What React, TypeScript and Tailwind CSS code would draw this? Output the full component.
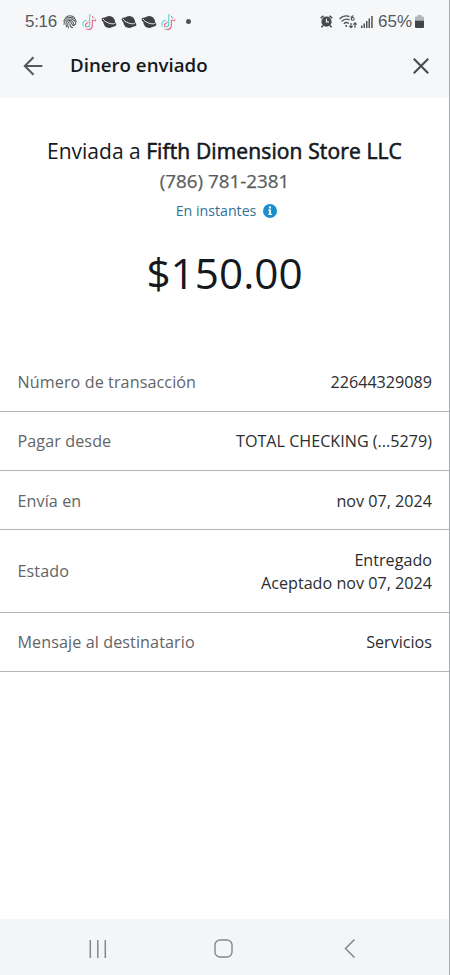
import { Fragment } from 'react'

interface Detalle {
  etiqueta: string
  valor: string[]
}

const detalles: Detalle[] = [
  { etiqueta: 'Número de transacción', valor: ['22644329089'] },
  { etiqueta: 'Pagar desde', valor: ['TOTAL CHECKING (...5279)'] },
  { etiqueta: 'Envía en', valor: ['nov 07, 2024'] },
  { etiqueta: 'Estado', valor: ['Entregado', 'Aceptado nov 07, 2024'] },
  { etiqueta: 'Mensaje al destinatario', valor: ['Servicios'] },
]

function Huella() {
  return (
    <svg viewBox="0 0 14 14" className="h-3.5 w-3.5" fill="none" stroke="#55575a" strokeWidth="1.05" strokeLinecap="round">
      <path d="M2.6 2.5C5 .1 9 .1 11.4 2.5" />
      <path d="M.8 6.2C2.2 1.3 11.8 1.3 13.2 6.2" />
      <path d="M1 9.3C1 2.3 12.8 2.1 12.8 8.8c0 1.2-2.2 1.2-2.3 0C10.3 4.1 3 4.5 3 8.7c0 1 .2 2 .6 3" />
      <path d="M5.6 12.9C4.2 10.3 4.4 6.8 6.8 6.8c2.9 0 .9 4 4.5 4" />
      <path d="M6.9 8.7c0 2.3 1 3.5 2.7 4" />
    </svg>
  )
}

function TikTok() {
  const nota = 'M8.2.5v9.800a3.400 3.400 0 1 1-3.400-3.500M8.200 1c.3 2.300 1.700 3.600 4.300 3.800'
  return (
    <svg viewBox="0 0 15 16" className="h-4 w-[15px]" fill="none" strokeWidth="2.1">
      <path d={nota} stroke="#5fd0d4" />
      <path d={nota} stroke="#e0637f" transform="translate(1.6 1.5)" />
      <path d={nota} stroke="#f7f8fa" strokeWidth="1.6" transform="translate(.8 .8)" />
    </svg>
  )
}

function Planeta() {
  return (
    <svg viewBox="0 0 16 14" className="h-3.5 w-4">
      <circle cx="8.2" cy="7" r="5.9" fill="#3f4144" />
      <ellipse cx="8" cy="7" rx="7.9" ry="3.3" transform="rotate(24 8 7)" fill="#3f4144" />
      <path d="M2.2 4.3c.5 2.4 8.8 5.9 11.4 4.2" fill="none" stroke="#f5f7f9" strokeWidth="0.9" strokeLinecap="round" />
    </svg>
  )
}

function Alarma() {
  return (
    <svg viewBox="0 0 13 13" className="h-[13px] w-[13px]">
      <path d="M2.8 10.5 1.5 12.4M10.2 10.5l1.3 1.9" stroke="#47494c" strokeWidth="1.6" />
      <path d="M.7 3.2 3.5.9M12.3 3.2 9.5.9" stroke="#47494c" strokeWidth="1.5" />
      <circle cx="6.5" cy="6.7" r="5.1" fill="#47494c" />
      <path d="M6.4 3.8v3.100h2.500" fill="none" stroke="#f5f6f8" strokeWidth="1.1" />
    </svg>
  )
}

function Wifi() {
  return (
    <svg viewBox="0 0 18 14" className="h-3.5 w-[18px]" fill="none" stroke="#505255" strokeWidth="1.3">
      <path d="M.6 4C3.300 1 7.500.3 10.500 1.600" />
      <path d="M2.600 6.500C4.800 4.200 8 3.700 10.600 5" />
      <path d="M4.800 8.800c1.500-1.500 3.500-1.500 5-.3" />
      <circle cx="7.2" cy="11" r="1" fill="#505255" stroke="none" />
      <path d="M14.600.7c-1.700.2-2.400 1.300-2.400 2.800" strokeWidth="1.1" />
      <circle cx="13.7" cy="3.9" r="1.4" strokeWidth="1.1" />
      <path d="M12 8v4.600M10.200 10.900l1.800 1.800 1.800-1.800M16 12.700V8M14.300 9.600 16 7.900l1.700 1.700" strokeWidth="1.2" />
    </svg>
  )
}

function Senal() {
  return (
    <svg viewBox="0 0 12 12" className="h-3 w-3" fill="#505255">
      <path d="M0 9.500h1.500V12H0zM2.500 7.500H4V12H2.500zM5 5h1.500v7H5zM7.500 2.500H9V12H7.500zM10.200 0h1.500v12h-1.500z" />
    </svg>
  )
}

function Bateria() {
  return (
    <svg viewBox="0 0 9 13" className="h-[13px] w-[9px]">
      <path d="M2.500 0h4v1.500H8a1 1 0 0 1 1 1V6H0V2.500a1 1 0 0 1 1-1h1.500z" fill="#b3b5b7" />
      <path d="M0 5.700h9V12a1 1 0 0 1-1 1H1a1 1 0 0 1-1-1z" fill="#424447" />
    </svg>
  )
}

function BarraEstado() {
  return (
    <div className="flex h-[43px] items-center justify-between pl-[25px] pr-[25px] font-['Liberation_Sans',sans-serif] text-[17px] text-[#55585b]">
      <div className="flex items-center">
        <span className="w-[38px] tracking-[-0.3px]">5:16</span>
        <Huella />
        <div className="ml-[5px] flex items-center gap-[3.9px]">
          <TikTok />
          <Planeta />
          <Planeta />
          <Planeta />
          <TikTok />
        </div>
        <span className="ml-[10px] h-[5px] w-[5px] rounded-full bg-[#505255]" />
      </div>
      <div className="flex items-center">
        <Alarma />
        <span className="ml-[6px]"><Wifi /></span>
        <span className="ml-[4px]"><Senal /></span>
        <span className="ml-[5px] w-[37px]">65%</span>
        <Bateria />
      </div>
    </div>
  )
}

function Encabezado() {
  return (
    <header className="h-[98px] bg-[#f5f7f9]">
      <BarraEstado />
      <div className="flex h-[45px] items-center pl-[23px] pr-5">
        <button aria-label="Volver">
          <svg viewBox="0 0 20 20" className="h-5 w-5" fill="none" stroke="#55585b" strokeWidth="2">
            <path d="M19.300 10H2M10.500 1.300 1.800 10l8.700 8.700" />
          </svg>
        </button>
        <h1 className="ml-[27px] flex-1 text-[18.7px] font-semibold text-[#14191e]">Dinero enviado</h1>
        <button aria-label="Cerrar">
          <svg viewBox="0 0 16 16" className="h-4 w-4" fill="none" stroke="#494c4f" strokeWidth="2.1">
            <path d="m.8.8 14.400 14.400M15.200.8.800 15.200" />
          </svg>
        </button>
      </div>
    </header>
  )
}

function Resumen() {
  return (
    <section className="flex h-[254.7px] flex-col items-center pt-[38px] text-[#14191e]">
      <p className="whitespace-nowrap text-[21px] leading-[30px]">
        Enviada a <span className="tracking-[0.13px] [-webkit-text-stroke:0.6px]">Fifth Dimension Store LLC</span>
      </p>
      <p className="text-[18.8px] leading-[30px] text-[#5b5d60] [-webkit-text-stroke:0.25px]">(786) 781-2381</p>
      <div className="flex h-[29px] items-center gap-[7px] pl-[4px] text-[14.2px] text-[#2f7397]">
        <span>En instantes</span>
        <svg viewBox="0 0 14 14" className="h-3.5 w-3.5">
          <circle cx="7" cy="7" r="7" fill="#1990cc" />
          <path d="M6 2.500h2v2H6zM5.200 5.500H8v4.300h1V11H5.200V9.800h1V6.700h-1z" fill="#fff" />
        </svg>
      </div>
      <p className="mt-[18px] text-[42.3px] leading-[60px]">$150.00</p>
    </section>
  )
}

export default function App() {
  return (
    <div className="flex h-[975px] w-[450px] flex-col overflow-hidden border-r border-[#a6a8aa] bg-white font-['Open_Sans',sans-serif]">
      <Encabezado />
      <main className="flex-1">
        <Resumen />
        <dl>
          {detalles.map(d => (
            <div key={d.etiqueta} className="flex items-center justify-between border-b border-[#b5b5b5] pb-[16.5px] pl-[17.5px] pr-[17px] pt-[18.5px] text-[16.15px] leading-[23.2px]">
              <dt className="tracking-[0.09px] text-[#626466]">{d.etiqueta}</dt>
              <dd className="text-right text-[#2b2d2f]">
                {d.valor.map((linea, i) => (
                  <Fragment key={linea}>
                    {i > 0 && <br />}
                    {linea}
                  </Fragment>
                ))}
              </dd>
            </div>
          ))}
        </dl>
      </main>
      <nav className="flex h-14 items-center bg-[#f4f5f7] pl-[89px] pt-[3px]">
        <svg viewBox="0 0 18 18" className="h-[18px] w-[18px]" stroke="#858789" strokeWidth="1.5">
          <path d="M1.300 0v18M8.800 0v18M16.300 0v18" />
        </svg>
        <svg viewBox="0 0 19 19" className="ml-[107px] h-[19px] w-[19px]" fill="none" stroke="#858789" strokeWidth="1.4">
          <rect x="1" y="1" width="17" height="17" rx="5" />
        </svg>
        <svg viewBox="0 0 11 19" className="ml-[111px] h-[19px] w-[11px]" fill="none" stroke="#858789" strokeWidth="1.5">
          <path d="M10.500.5 1.500 9.500l9 9" />
        </svg>
      </nav>
    </div>
  )
}
